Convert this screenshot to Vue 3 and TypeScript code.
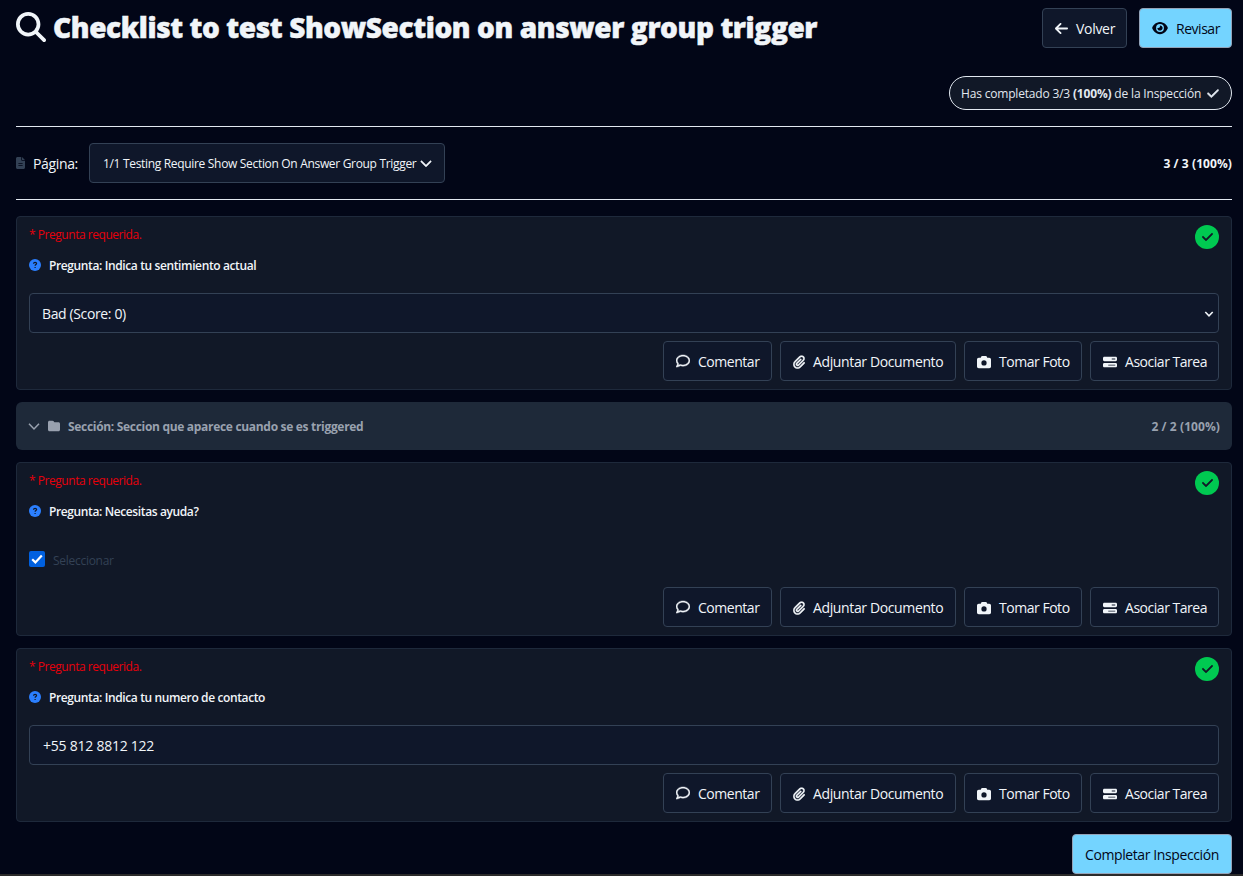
<template>
  <main class="inspection">
    <header class="inspection__header">
      <h1 class="inspection__title">
        <svg class="inspection__title-icon" viewBox="0 0 512 512"><path :d="icons.search" /></svg>
        <span>Checklist to test ShowSection on answer group trigger</span>
      </h1>
      <div class="inspection__nav">
        <button class="btn btn--back">
          <svg class="btn__icon btn__icon--arrow" viewBox="0 0 448 512"><path :d="icons.arrowLeft" /></svg>
          <span class="btn__label">Volver</span>
        </button>
        <button class="btn btn--primary btn--review">
          <svg class="btn__icon btn__icon--eye" viewBox="0 0 576 512"><path :d="icons.eye" /></svg>
          <span class="btn__label">Revisar</span>
        </button>
      </div>
    </header>

    <div class="progress">
      <div class="progress__pill">
        <span class="progress__text">Has completado {{ completed }}/{{ total }} <strong>({{ percentage }}%)</strong> de la Inspección</span>
        <svg class="progress__check" viewBox="0 0 448 512"><path :d="icons.check" /></svg>
      </div>
    </div>

    <div class="pager">
      <svg class="pager__icon" viewBox="0 0 384 512"><path :d="icons.file" /></svg>
      <span class="pager__label">Página:</span>
      <button class="pager__select">
        <span class="pager__name">1/1 Testing Require Show Section On Answer Group Trigger</span>
        <svg class="pager__chevron" viewBox="0 0 512 512"><path :d="icons.chevronDown" /></svg>
      </button>
      <span class="pager__count">{{ completed }} / {{ total }} ({{ percentage }}%)</span>
    </div>

    <template v-for="question in questions" :key="question.id">
      <div v-if="question.section" class="section-bar">
        <svg class="section-bar__chevron" viewBox="0 0 12 12"><path d="M1 3.7 6 8.9l5-5.2" /></svg>
        <svg class="section-bar__folder" viewBox="0 0 512 512"><path :d="icons.folder" /></svg>
        <span class="section-bar__name">Sección: {{ question.section }}</span>
        <span class="section-bar__count">2 / 2 (100%)</span>
      </div>

      <section class="question">
        <div class="question__required">* Pregunta requerida.</div>
        <span class="question__status">
          <svg viewBox="0 0 448 512"><path :d="icons.check" /></svg>
        </span>
        <div class="question__title">
          <svg class="question__help" viewBox="0 0 12 12">
            <circle cx="6" cy="6" r="6" />
            <path d="M4.5 4.7c.1-1 .7-1.4 1.6-1.4.9 0 1.5.5 1.5 1.2 0 1-1.5 1.1-1.5 2.2M6.1 8v1" />
          </svg>
          <span class="question__name">Pregunta: {{ question.title }}</span>
        </div>

        <div class="question__answer">
          <div v-if="question.type === 'select'" class="field field--select">
            <span>{{ question.value }}</span>
            <svg class="field__chevron" viewBox="0 0 10 8"><path d="m1.3 2 3.7 3.8L8.7 2" /></svg>
          </div>
          <label v-else-if="question.type === 'checkbox'" class="check">
            <span class="check__box">
              <svg viewBox="0 0 16 16"><path d="m3.2 8.2 3.2 3.2 6.4-7" /></svg>
            </span>
            <span class="check__label">Seleccionar</span>
          </label>
          <div v-else class="field field--text"><span>{{ question.value }}</span></div>
        </div>

        <div class="question__actions">
          <button v-for="action in actions" :key="action.name" :class="['btn', `btn--${action.name}`]">
            <svg :class="['btn__icon', `btn__icon--${action.name}`]" :viewBox="action.viewBox"><path :d="action.path" /></svg>
            <span class="btn__label">{{ action.label }}</span>
          </button>
        </div>
      </section>
    </template>

    <div class="inspection__footer">
      <button class="btn btn--primary btn--complete"><span class="btn__label">Completar Inspección</span></button>
    </div>
    <div class="inspection__edge"></div>
  </main>
</template>

<script setup lang="ts">
import { computed, ref } from 'vue'

interface Question {
  id: number
  type: 'select' | 'checkbox' | 'text'
  title: string
  value?: string
  section?: string
}

interface Action {
  name: string
  label: string
  viewBox: string
  path: string
}

const completed = ref(3)
const total = ref(3)
const percentage = computed(() => Math.round((completed.value / total.value) * 100))

const questions: Question[] = [
  { id: 1, type: 'select', title: 'Indica tu sentimiento actual', value: 'Bad (Score: 0)' },
  { id: 2, type: 'checkbox', title: 'Necesitas ayuda?', section: 'Seccion que aparece cuando se es triggered' },
  { id: 3, type: 'text', title: 'Indica tu numero de contacto', value: '+55 812 8812 122' }
]

const icons = {
  search: 'M416 208c0 45.9-14.9 88.3-40 122.7L502.6 457.4c12.5 12.5 12.5 32.8 0 45.3s-32.8 12.5-45.3 0L330.7 376c-34.4 25.2-76.8 40-122.7 40C93.1 416 0 322.9 0 208S93.1 0 208 0S416 93.1 416 208zM208 352a144 144 0 1 0 0-288 144 144 0 1 0 0 288z',
  arrowLeft: 'M9.4 233.4c-12.5 12.5-12.5 32.8 0 45.3l160 160c12.5 12.5 32.8 12.5 45.3 0s12.5-32.8 0-45.3L109.2 288 416 288c17.7 0 32-14.3 32-32s-14.3-32-32-32l-306.7 0L214.6 118.6c12.5-12.5 12.5-32.8 0-45.3s-32.8-12.5-45.3 0l-160 160z',
  eye: 'M288 32c-80.8 0-145.5 36.8-192.6 80.6C48.6 156 17.3 208 2.5 243.7c-3.3 7.9-3.3 16.7 0 24.6C17.3 304 48.6 356 95.4 399.4C142.5 443.2 207.2 480 288 480s145.5-36.8 192.6-80.6c46.8-43.5 78.1-95.4 93-131.1c3.3-7.9 3.3-16.7 0-24.6c-14.9-35.7-46.2-87.7-93-131.1C433.5 68.8 368.8 32 288 32zM144 256a144 144 0 1 1 288 0 144 144 0 1 1-288 0zm144-64c0 35.3-28.7 64-64 64c-7.1 0-13.9-1.2-20.3-3.3c-5.5-1.8-11.9 1.6-11.7 7.4c.3 6.9 1.3 13.8 3.2 20.7c13.7 51.2 66.4 81.6 117.6 67.9s81.6-66.4 67.9-117.6c-11.1-41.5-47.8-69.4-88.6-71.1c-5.8-.2-9.2 6.1-7.4 11.7c2.1 6.4 3.3 13.2 3.3 20.3z',
  check: 'M438.6 105.4c12.5 12.5 12.5 32.8 0 45.3l-256 256c-12.5 12.5-32.8 12.5-45.3 0l-128-128c-12.5-12.5-12.5-32.8 0-45.3s32.8-12.5 45.3 0L160 338.7 393.4 105.4c12.5-12.5 32.8-12.5 45.3 0z',
  chevronDown: 'M233.4 406.6c12.5 12.5 32.8 12.5 45.3 0l192-192c12.5-12.5 12.5-32.8 0-45.3s-32.8-12.5-45.3 0L256 338.7 86.6 169.4c-12.5-12.5-32.8-12.5-45.3 0s-12.5 32.8 0 45.3l192 192z',
  file: 'M64 0C28.7 0 0 28.7 0 64L0 448c0 35.3 28.7 64 64 64l256 0c35.3 0 64-28.7 64-64l0-288-128 0c-17.7 0-32-14.3-32-32L224 0 64 0zM256 0l0 128 128 0L256 0zM112 256l160 0a16 16 0 0 1 0 32l-160 0a16 16 0 0 1 0-32zm0 96l160 0a16 16 0 0 1 0 32l-160 0a16 16 0 0 1 0-32z',
  folder: 'M64 480H448c35.3 0 64-28.7 64-64V160c0-35.3-28.7-64-64-64H288c-10.1 0-19.6-4.7-25.6-12.8L243.2 57.6C231.1 41.5 212.1 32 192 32H64C28.7 32 0 60.7 0 96V416c0 35.3 28.7 64 64 64z'
}

const actions: Action[] = [
  {
    name: 'comment',
    label: 'Comentar',
    viewBox: '0 0 512 512',
    path: 'M123.6 391.3c12.9-9.4 29.6-11.8 44.6-6.4c26.5 9.6 56.2 15.1 87.8 15.1c124.7 0 208-80.5 208-160s-83.3-160-208-160S48 160.5 48 240c0 32 12.4 62.8 35.7 89.2c8.6 9.7 12.8 22.5 11.8 35.5c-1.4 18.1-5.7 34.7-11.3 49.4c17-7.9 31.1-16.7 39.4-22.7zM21.2 431.9c1.8-2.7 3.5-5.4 5.1-8.1c10-16.6 19.5-38.4 21.4-62.9C17.7 326.8 0 285.1 0 240C0 125.1 114.6 32 256 32s256 93.1 256 208s-114.6 208-256 208c-37.1 0-72.3-6.4-104.1-17.9c-11.9 8.7-31.3 20.6-54.3 30.6c-15.1 6.6-32.3 12.6-50.1 16.1c-.8 .2-1.6 .3-2.4 .5c-4.4 .8-8.7 1.5-13.2 1.9c-.2 0-.5 .1-.7 .1c-5.1 .5-10.2 .8-15.3 .8c-6.5 0-12.3-3.9-14.8-9.9c-2.5-6-1.1-12.8 3.4-17.4c4.1-4.2 7.8-8.7 11.3-13.5c1.7-2.3 3.3-4.6 4.8-6.9l.3-.5z'
  },
  {
    name: 'attach',
    label: 'Adjuntar Documento',
    viewBox: '0 0 448 512',
    path: 'M364.2 83.8c-24.4-24.4-64-24.4-88.4 0l-184 184c-42.1 42.1-42.1 110.3 0 152.4s110.3 42.1 152.4 0l152-152c10.9-10.9 28.7-10.9 39.6 0s10.9 28.7 0 39.6l-152 152c-64 64-167.6 64-231.6 0s-64-167.6 0-231.6l184-184c46.3-46.3 121.3-46.3 167.6 0s46.3 121.3 0 167.6l-176 176c-28.6 28.6-75 28.6-103.6 0s-28.6-75 0-103.6l144-144c10.9-10.9 28.7-10.9 39.6 0s10.9 28.7 0 39.6l-144 144c-6.7 6.7-6.7 17.7 0 24.4s17.7 6.7 24.4 0l176-176c24.4-24.4 24.4-64 0-88.4z'
  },
  {
    name: 'photo',
    label: 'Tomar Foto',
    viewBox: '0 0 512 512',
    path: 'M149.1 64.8L138.7 96H64C28.7 96 0 124.7 0 160V416c0 35.3 28.7 64 64 64H448c35.3 0 64-28.7 64-64V160c0-35.3-28.7-64-64-64H373.3L362.9 64.8C356.4 45.2 338.1 32 317.4 32H194.6c-20.7 0-39 13.2-45.5 32.8zM256 192a96 96 0 1 1 0 192 96 96 0 1 1 0-192z'
  },
  {
    name: 'task',
    label: 'Asociar Tarea',
    viewBox: '0 0 512 512',
    path: 'M448 160H320V128H448v32zM48 64C21.5 64 0 85.5 0 112v64c0 26.5 21.5 48 48 48H464c26.5 0 48-21.5 48-48V112c0-26.5-21.5-48-48-48H48zM448 352v32H192V352H448zM48 288c-26.5 0-48 21.5-48 48v64c0 26.5 21.5 48 48 48H464c26.5 0 48-21.5 48-48V336c0-26.5-21.5-48-48-48H48z'
  }
]
</script>

<style>
body {
  background: #020617;
}
</style>

<style scoped>
.inspection {
  box-sizing: border-box;
  height: 876px;
  padding: 8px 11px 0 16px;
  overflow: hidden;
  background: #020617;
  color: #f1f5f9;
  font-family: "Segoe UI", "Open Sans", "Noto Sans", sans-serif;
  font-size: 14px;
}

svg {
  display: block;
  flex-shrink: 0;
  fill: currentColor;
}

span {
  white-space: nowrap;
}

.inspection__header {
  display: flex;
  justify-content: space-between;
  height: 40px;
}

.inspection__title {
  display: flex;
  align-items: center;
  gap: 7px;
  margin: 0;
  height: 38px;
  font-size: 28px;
  font-weight: 800;
  letter-spacing: -0.4px;
  -webkit-text-stroke: 0.5px currentColor;
}

.inspection__title-icon {
  width: 30px;
  height: 30px;
}

.inspection__nav {
  display: flex;
  gap: 12px;
}

.btn {
  box-sizing: border-box;
  display: flex;
  align-items: center;
  gap: 8px;
  height: 40px;
  padding: 2px 12px 0;
  border: 1px solid #334155;
  border-radius: 4px;
  background: #0f172a;
  color: #f1f5f9;
  font-family: inherit;
  font-size: 14px;
  letter-spacing: -0.47px;
  cursor: pointer;
}

.btn__label {
  margin-top: -2px;
}

.btn--primary {
  border-color: #94a3b8;
  background: #74d4ff;
  color: #020617;
}

.btn--back {
  width: 85px;
  letter-spacing: -0.3px;
}

.btn--review {
  width: 93px;
}

.btn--complete {
  width: 160px;
  letter-spacing: -0.4px;
}

.btn--comment {
  width: 109px;
}

.btn--attach {
  width: 176px;
  letter-spacing: -0.37px;
}

.btn--photo {
  width: 118px;
}

.btn--task {
  width: 129px;
}

.btn__icon {
  width: 14px;
  height: 14px;
}

.btn__icon--arrow {
  width: 13px;
  height: 15px;
  margin-top: -1px;
}

.btn__icon--eye {
  width: 16px;
  margin-top: -2px;
}

.btn__icon--comment {
  margin-top: -3px;
  stroke: currentColor;
  stroke-width: 14;
}

.btn__icon--attach {
  width: 12px;
  stroke: currentColor;
  stroke-width: 10;
}

.progress {
  display: flex;
  justify-content: flex-end;
  padding: 28px 0 16px;
  border-bottom: 1px solid #e2e8f0;
}

.progress__pill {
  box-sizing: border-box;
  display: flex;
  align-items: center;
  justify-content: space-between;
  width: 283px;
  height: 34px;
  padding: 0 12px 0 11px;
  border: 1px solid #e2e8f0;
  border-radius: 17px;
  background: #111827;
  color: #e2e8f0;
}

.progress__text {
  font-size: 12px;
  letter-spacing: -0.18px;
}

.progress__check {
  width: 12px;
  height: 13px;
  stroke: currentColor;
  stroke-width: 20;
}

.pager {
  display: flex;
  align-items: center;
  padding: 16px 0;
  margin-bottom: 16px;
  border-bottom: 1px solid #e2e8f0;
}

.pager__icon {
  width: 9px;
  height: 12px;
  margin-right: 8px;
  color: #334155;
}

.pager__label {
  width: 56px;
  letter-spacing: -0.35px;
}

.pager__select {
  box-sizing: border-box;
  display: flex;
  align-items: center;
  justify-content: space-between;
  width: 356px;
  height: 40px;
  padding: 0 12px 0 13px;
  border: 1px solid #334155;
  border-radius: 4px;
  background: #0f172a;
  color: #f1f5f9;
  font-family: inherit;
  font-size: 12px;
}

.pager__name {
  letter-spacing: -0.32px;
}

.pager__chevron {
  width: 12px;
  height: 12px;
  stroke: currentColor;
  stroke-width: 20;
}

.pager__count {
  margin-left: auto;
  font-size: 12px;
  font-weight: 700;
  letter-spacing: 0.08px;
}

.section-bar {
  box-sizing: border-box;
  display: flex;
  align-items: center;
  height: 48px;
  margin-bottom: 12px;
  padding: 0 12px;
  border-radius: 6px;
  background: #1e2939;
  color: #99a1af;
  font-size: 12px;
  font-weight: 700;
}

.section-bar__chevron {
  width: 12px;
  height: 12px;
  margin-right: 8px;
  fill: none;
  stroke: currentColor;
  stroke-width: 1.5;
}

.section-bar__folder {
  width: 12px;
  height: 12px;
  margin-right: 8px;
}

.section-bar__name {
  letter-spacing: -0.31px;
}

.section-bar__count {
  margin-left: auto;
  letter-spacing: 0.08px;
}

.question {
  position: relative;
  box-sizing: border-box;
  height: 174px;
  margin-bottom: 12px;
  padding: 8px 12px;
  border: 1px solid #1e293b;
  border-radius: 4px;
  background: #111827;
}

.question__required {
  height: 18px;
  color: #e7000b;
  font-size: 12px;
  line-height: 19px;
  letter-spacing: -0.46px;
}

.question__status {
  position: absolute;
  top: 8px;
  right: 12px;
  display: flex;
  align-items: center;
  justify-content: center;
  width: 24px;
  height: 24px;
  border-radius: 50%;
  background: #00c951;
  color: #111827;
}

.question__status svg {
  width: 11px;
  height: 12px;
  stroke: currentColor;
  stroke-width: 24;
}

.question__title {
  display: flex;
  align-items: center;
  gap: 8px;
  height: 18px;
  margin-top: 13px;
  font-size: 12px;
  font-weight: 600;
}

.question__name {
  letter-spacing: -0.38px;
}

.question__help {
  width: 12px;
  height: 12px;
  fill: #2b7fff;
}

.question__help path {
  fill: none;
  stroke: #111827;
  stroke-width: 1.2;
}

.question__answer {
  height: 40px;
  margin-top: 19px;
}

.field {
  box-sizing: border-box;
  display: flex;
  align-items: center;
  justify-content: space-between;
  height: 40px;
  padding: 0 4px 0 12px;
  border: 1px solid #334155;
  border-radius: 4px;
  background: #0f172a;
}

.field--select {
  letter-spacing: -0.37px;
}

.field--text {
  padding-left: 13px;
  letter-spacing: -0.24px;
}

.field__chevron {
  width: 10px;
  height: 8px;
  margin-top: 2px;
  fill: none;
  stroke: currentColor;
  stroke-width: 1.6;
}

.check {
  display: flex;
  align-items: center;
  gap: 8px;
  padding-top: 12px;
}

.check__box {
  width: 16px;
  height: 16px;
  border-radius: 2px;
  background: #0060df;
  color: #fff;
}

.check__box svg {
  fill: none;
  stroke: currentColor;
  stroke-width: 2.2;
}

.check__label {
  margin-top: 2px;
  margin-bottom: -2px;
  color: #334155;
  font-size: 12px;
  line-height: 16px;
  letter-spacing: -0.28px;
}

.question__actions {
  display: flex;
  justify-content: flex-end;
  gap: 8px;
  margin-top: 8px;
}

.inspection__footer {
  display: flex;
  justify-content: flex-end;
}

.inspection__edge {
  height: 2px;
  margin: 0 -11px 0 -16px;
  background: #2b2a2a;
}
</style>
